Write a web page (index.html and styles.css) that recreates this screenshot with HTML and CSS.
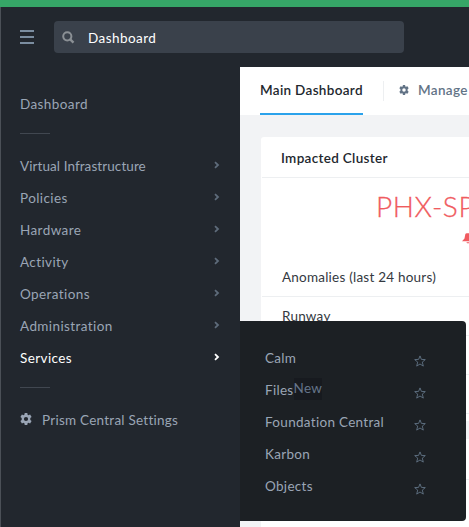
FILE: index.html
```html
<!DOCTYPE html>
<html lang="en">
<head>
<meta charset="utf-8">
<title>Prism Central</title>
<link rel="stylesheet" href="styles.css">
</head>
<body>
<svg class="defs" width="0" height="0" aria-hidden="true">
  <symbol id="gear" viewBox="0 0 12 12"><path fill-rule="evenodd" d="M4.700 0h2.600l.3 1.700.8.5 1.700-.6 1.500 2.400L10.300 5.100v1.800l1.300 1.100-1.500 2.400-1.700-.6-.8.500L7.300 12H4.700l-.3-1.700-.8-.5-1.700.6L.4 8l1.300-1.100V5.100L.4 4l1.500-2.400 1.700.6.800-.5zM6 3.900a2.100 2.100 0 1 0 0 4.200 2.100 2.100 0 0 0 0-4.200z"/></symbol>
  <symbol id="chevron" viewBox="0 0 6 8"><path d="M1 1.200 4 4 1 6.800" fill="none" stroke="currentColor" stroke-width="1.800"/></symbol>
  <symbol id="star" viewBox="0 0 12 12"><path d="M6 .9 7.400 4.400l3.900.2-3 2.500 1 4L6 9l-3.300 2.100 1-4-3-2.500 3.900-.2z" fill="none" stroke="currentColor" stroke-width=".85"/></symbol>
</svg>
<div class="accent"></div>
<header class="topbar">
  <div class="burger"><i></i><i></i><i></i></div>
  <div class="search">
    <svg width="13" height="13" viewBox="0 0 13 13"><circle cx="5.300" cy="5.300" r="4.100" fill="none" stroke="currentColor" stroke-width="2"/><path d="m8.200 8.300 3.300 3.300" stroke="currentColor" stroke-width="2.400"/></svg>
    <span>Dashboard</span>
  </div>
</header>
<div class="shell">
  <nav class="sidebar">
    <a class="item"><span>Dashboard</span></a>
    <hr class="first">
    <a class="item"><span class="tight">Virtual Infrastructure</span><svg><use href="#chevron"/></svg></a>
    <a class="item"><span>Policies</span><svg><use href="#chevron"/></svg></a>
    <a class="item"><span>Hardware</span><svg><use href="#chevron"/></svg></a>
    <a class="item"><span>Activity</span><svg><use href="#chevron"/></svg></a>
    <a class="item"><span>Operations</span><svg><use href="#chevron"/></svg></a>
    <a class="item"><span>Administration</span><svg><use href="#chevron"/></svg></a>
    <a class="item active"><span>Services</span><svg><use href="#chevron"/></svg></a>
    <hr class="second">
    <a class="item settings"><svg><use href="#gear"/></svg><span>Prism Central Settings</span></a>
    <div class="flyout">
      <a><span>Calm</span><svg><use href="#star"/></svg></a>
      <a><span>Files</span><em>New</em><svg><use href="#star"/></svg></a>
      <a><span>Foundation Central</span><svg><use href="#star"/></svg></a>
      <a><span>Karbon</span><svg><use href="#star"/></svg></a>
      <a><span>Objects</span><svg><use href="#star"/></svg></a>
    </div>
  </nav>
  <main class="main">
    <div class="tabs">
      <div class="tab"><span>Main Dashboard</span></div>
      <div class="manage"><svg><use href="#gear"/></svg><span>Manage</span></div>
    </div>
    <div class="board">
      <section class="card cluster">
        <h2>Impacted Cluster</h2>
        <div class="hero">
          <strong>PHX-SP</strong>
          <svg width="12" height="11" viewBox="0 0 12 11"><path fill="currentColor" d="M3.300 1.300Q3.600.2 4.800.2h2.400q1.200 0 1.500 1.100L9.500 5.500 12 8.200H0l2.500-2.700zM4.400 9.200h3.200L7 10.300H5z"/></svg>
        </div>
        <div class="row">Anomalies (last 24 hours)</div>
        <div class="row">Runway</div>
        <div class="row"></div>
        <div class="row"></div>
      </section>
      <section class="card"><h2></h2></section>
    </div>
  </main>
</div>
</body>
</html>
```

FILE: styles.css
```css
* { box-sizing: border-box; }
body {
  margin: 0;
  width: 469px;
  height: 527px;
  overflow: hidden;
  display: flex;
  flex-direction: column;
  background: #22272e;
  font: 13.500px/20px Lato, "Liberation Sans", sans-serif;
  color: #9aa5b5;
}
.defs { position: absolute; }
svg { display: block; flex: none; fill: currentColor; }
.accent { height: 7px; flex: none; background: #36a667; }
.topbar {
  height: 60px;
  flex: none;
  display: flex;
  align-items: center;
  padding-left: 19px;
  border-left: 1px solid #4b5057;
}
.burger { width: 14px; margin-right: 20px; display: grid; gap: 4px; }
.burger i { height: 2px; background: #7b8da0; }
.search {
  width: 350px;
  height: 32px;
  display: flex;
  align-items: center;
  padding-left: 8px;
  border-radius: 4px;
  background: #3a414b;
  color: #fff;
  letter-spacing: .45px;
}
.search svg { color: #8b9095; margin-right: 13px; }
.search span { padding-top: 2px; }
.shell { flex: 1; display: flex; min-height: 0; }
.sidebar {
  position: relative;
  z-index: 1;
  width: 240px;
  flex: none;
  padding: 21px 20px 0 19px;
  border-left: 1px solid #4b5057;
  letter-spacing: .4px;
}
.item { height: 32px; display: flex; align-items: center; justify-content: space-between; }
.item svg { width: 6px; height: 8px; color: #5e6b7a; margin-top: -2px; }
.item .tight { letter-spacing: .08px; }
.item.active, .item.active svg { color: #fff; }
.item.settings { justify-content: flex-start; gap: 10px; letter-spacing: .25px; }
.item.settings svg { width: 12px; height: 12px; color: #9aa5b5; }
hr { width: 30px; height: 1px; margin: 0; border: 0; background: #414750; }
hr.first { margin: 13px 0 16px; }
hr.second { margin: 13px 0 16px; }
.flyout {
  position: absolute;
  left: 239px;
  top: 254px;
  width: 226px;
  height: 200px;
  padding: 21px 40px 0 25px;
  border-radius: 0 4px 4px 0;
  background: #1c2024;
  letter-spacing: .3px;
}
.flyout a { height: 32px; display: flex; align-items: center; }
.flyout svg { width: 12px; height: 12px; margin: 5px 0 0 auto; color: #66788b; }
.flyout em {
  height: 22px;
  width: 28px;
  margin-top: -2px;
  background: #171a1f;
  color: #65758a;
  font-style: normal;
}
.main { flex: 1; min-width: 0; overflow: hidden; background: #f2f3f5; }
.tabs {
  height: 48px;
  display: flex;
  padding-left: 20px;
  background: #fff;
  font-weight: 600;
  letter-spacing: .32px;
}
.tab {
  width: 103px;
  padding-top: 13px;
  border-bottom: 2px solid #2ba2eb;
  color: #22272e;
  white-space: nowrap;
}
.manage {
  height: 20px;
  display: flex;
  align-items: center;
  margin: 14px 0 0 20px;
  padding-left: 15px;
  border-left: 1px solid #edeff1;
  color: #627386;
}
.manage span { padding-bottom: 2px; }
.manage svg { width: 10px; height: 10px; margin: -2px 9px 0 0; }
.board { padding: 22px 0 0 21px; width: 429px; }
.card { height: 284px; margin-bottom: 18px; border-radius: 3px; background: #fff; color: #343941; }
.card h2 {
  height: 41px;
  margin: 0 0 0 1px;
  padding: 11px 19px 0;
  border-bottom: 1px solid #edeff1;
  font-size: 13.500px;
  font-weight: 600;
  line-height: 20px;
  letter-spacing: .32px;
  color: #22272e;
}
.hero {
  height: 80px;
  padding: 9px 0 0 115px;
  color: #f05b60;
}
.hero strong { display: block; font-size: 28px; font-weight: 300; line-height: 38px; letter-spacing: .6px; white-space: nowrap; -webkit-text-stroke: .3px currentColor; }
.hero svg { margin: 8px 0 0 86px; }
.row {
  height: 39px;
  margin-left: 1px;
  padding: 9px 20px 0;
  border-bottom: 1px solid #edeff1;
  letter-spacing: .22px;
}
```
